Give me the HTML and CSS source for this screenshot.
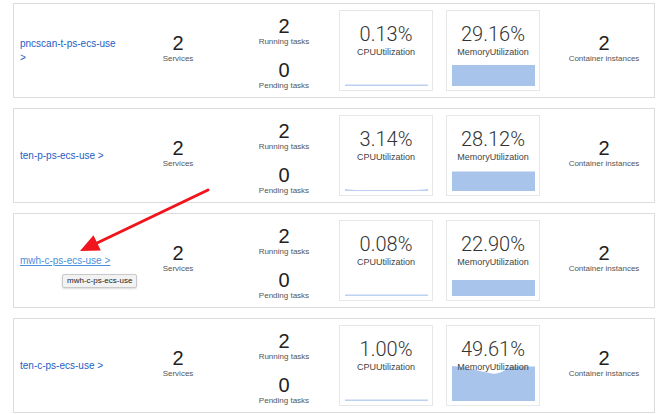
FILE: index.html
```html
<!DOCTYPE html>
<html>
<head>
<meta charset="utf-8">
<link rel="stylesheet" href="styles.css">
</head>
<body>
<div class="page">
  <section class="cluster">
    <div class="name"><a class="cluster-link" href="#">pncscan-t-ps-ecs-use &gt;</a></div>
    <div class="stat side"><div class="num">2</div><div class="lbl">Services</div></div>
    <div class="tasks">
      <div class="stat"><div class="num">2</div><div class="lbl">Running tasks</div></div>
      <div class="stat"><div class="num">0</div><div class="lbl">Pending tasks</div></div>
    </div>
    <div class="metrics">
      <div class="metric">
        <svg class="chart" viewBox="0 0 83 40" preserveAspectRatio="none"><rect class="line" x="0" y="38.5" width="83" height="1.5"/></svg>
        <div class="value">0.13%</div>
        <div class="mlbl">CPUUtilization</div>
      </div>
      <div class="metric">
        <svg class="chart" viewBox="0 0 83 40" preserveAspectRatio="none"><rect class="area" x="0" y="19" width="83" height="21"/></svg>
        <div class="value">29.16%</div>
        <div class="mlbl">MemoryUtilization</div>
      </div>
    </div>
    <div class="stat side instances"><div class="num">2</div><div class="lbl">Container instances</div></div>
  </section>

  <section class="cluster">
    <div class="name"><a class="cluster-link" href="#">ten-p-ps-ecs-use &gt;</a></div>
    <div class="stat side"><div class="num">2</div><div class="lbl">Services</div></div>
    <div class="tasks">
      <div class="stat"><div class="num">2</div><div class="lbl">Running tasks</div></div>
      <div class="stat"><div class="num">0</div><div class="lbl">Pending tasks</div></div>
    </div>
    <div class="metrics">
      <div class="metric">
        <svg class="chart" viewBox="0 0 83 40" preserveAspectRatio="none"><path class="line" d="M0,38 C5,38.6 9,39 15,39 L72,39 C77,39 80,38.3 83,37.8 L83,40 L0,40 Z"/></svg>
        <div class="value">3.14%</div>
        <div class="mlbl">CPUUtilization</div>
      </div>
      <div class="metric">
        <svg class="chart" viewBox="0 0 83 40" preserveAspectRatio="none"><rect class="area" x="0" y="20.5" width="83" height="19.5"/></svg>
        <div class="value">28.12%</div>
        <div class="mlbl">MemoryUtilization</div>
      </div>
    </div>
    <div class="stat side instances"><div class="num">2</div><div class="lbl">Container instances</div></div>
  </section>

  <section class="cluster">
    <div class="name">
      <a class="cluster-link is-hover" href="#">mwh-c-ps-ecs-use &gt;</a>
      <span class="tooltip">mwh-c-ps-ecs-use</span>
    </div>
    <div class="stat side"><div class="num">2</div><div class="lbl">Services</div></div>
    <div class="tasks">
      <div class="stat"><div class="num">2</div><div class="lbl">Running tasks</div></div>
      <div class="stat"><div class="num">0</div><div class="lbl">Pending tasks</div></div>
    </div>
    <div class="metrics">
      <div class="metric">
        <svg class="chart" viewBox="0 0 83 40" preserveAspectRatio="none"><rect class="line" x="0" y="38.5" width="83" height="1.5"/></svg>
        <div class="value">0.08%</div>
        <div class="mlbl">CPUUtilization</div>
      </div>
      <div class="metric">
        <svg class="chart" viewBox="0 0 83 40" preserveAspectRatio="none"><rect class="area" x="0" y="24" width="83" height="16"/></svg>
        <div class="value">22.90%</div>
        <div class="mlbl">MemoryUtilization</div>
      </div>
    </div>
    <div class="stat side instances"><div class="num">2</div><div class="lbl">Container instances</div></div>
  </section>

  <section class="cluster">
    <div class="name"><a class="cluster-link" href="#">ten-c-ps-ecs-use &gt;</a></div>
    <div class="stat side"><div class="num">2</div><div class="lbl">Services</div></div>
    <div class="tasks">
      <div class="stat"><div class="num">2</div><div class="lbl">Running tasks</div></div>
      <div class="stat"><div class="num">0</div><div class="lbl">Pending tasks</div></div>
    </div>
    <div class="metrics">
      <div class="metric">
        <svg class="chart" viewBox="0 0 83 40" preserveAspectRatio="none"><rect class="line" x="0" y="38.5" width="83" height="1.5"/></svg>
        <div class="value">1.00%</div>
        <div class="mlbl">CPUUtilization</div>
      </div>
      <div class="metric">
        <svg class="chart" viewBox="0 0 83 40" preserveAspectRatio="none"><path class="area" d="M0,5 C14,6 26,10 40,12.5 C47,13.5 52,10 58,5.5 L83,5.5 L83,40 L0,40 Z"/></svg>
        <div class="value">49.61%</div>
        <div class="mlbl">MemoryUtilization</div>
      </div>
    </div>
    <div class="stat side instances"><div class="num">2</div><div class="lbl">Container instances</div></div>
  </section>

  <svg class="annotation" viewBox="0 0 670 414" width="670" height="414">
    <line x1="208" y1="190" x2="96" y2="243.5" stroke="#f0141c" stroke-width="3" stroke-linecap="round"/>
    <polygon points="80,251 93.5,235.2 100.8,250.5" fill="#f0141c"/>
  </svg>
</div>
</body>
</html>
```

FILE: styles.css
```css
* {
  box-sizing: border-box;
}

body {
  margin: 0;
  background: #ffffff;
  font-family: "Liberation Sans", Arial, Helvetica, sans-serif;
}

.page {
  position: relative;
  padding: 3px 15px 0 13px;
  display: flex;
  flex-direction: column;
  gap: 10px;
}

.cluster {
  width: 642px;
  height: 95px;
  border: 1px solid #dcdcdc;
  background: #fff;
  padding: 6px 0 6px 6px;
  display: grid;
  grid-template-columns: 100px 116px 96px 208px 1fr;
  align-items: center;
}

.name {
  position: relative;
  font-size: 10px;
  line-height: 14px;
}

.cluster-link {
  color: #2360c4;
  text-decoration: none;
}

.cluster-link.is-hover {
  color: #4a8fdc;
  text-decoration: underline;
}

.tooltip {
  position: absolute;
  left: 42px;
  top: 20px;
  white-space: nowrap;
  font-size: 8px;
  line-height: 12px;
  padding: 0 4px;
  color: #222;
  background: #f2f2f2;
  border: 1px solid #c9c9c9;
  border-radius: 2px;
  box-shadow: 0 1px 2px rgba(0, 0, 0, 0.15);
}

.stat {
  text-align: center;
}

.side {
  padding-bottom: 6px;
}

.instances {
  padding-left: 14px;
}

.num {
  font-size: 20px;
  line-height: 22px;
  color: #222;
}

.lbl {
  font-size: 8px;
  line-height: 10px;
  color: #555;
}

.tasks {
  align-self: end;
  display: flex;
  flex-direction: column;
  gap: 12px;
}

.metrics {
  margin-left: 7px;
  display: flex;
  gap: 13px;
  height: 81px;
}

.metric {
  position: relative;
  width: 94px;
  height: 81px;
  border: 1px solid #e7e7e7;
  padding-top: 11px;
  text-align: center;
}

.value {
  position: relative;
  font-family: Roboto, "Liberation Sans", sans-serif;
  font-weight: 300;
  font-size: 20px;
  line-height: 24px;
  color: #333;
}

.mlbl {
  position: relative;
  font-size: 9px;
  line-height: 12px;
  color: #444;
}

.chart {
  position: absolute;
  left: 5px;
  bottom: 4px;
  width: 83px;
  height: 40px;
}

.chart .area {
  fill: #a9c4eb;
}

.chart .line {
  fill: #bcd0f1;
}

.annotation {
  position: absolute;
  left: 0;
  top: 0;
  pointer-events: none;
}
```
